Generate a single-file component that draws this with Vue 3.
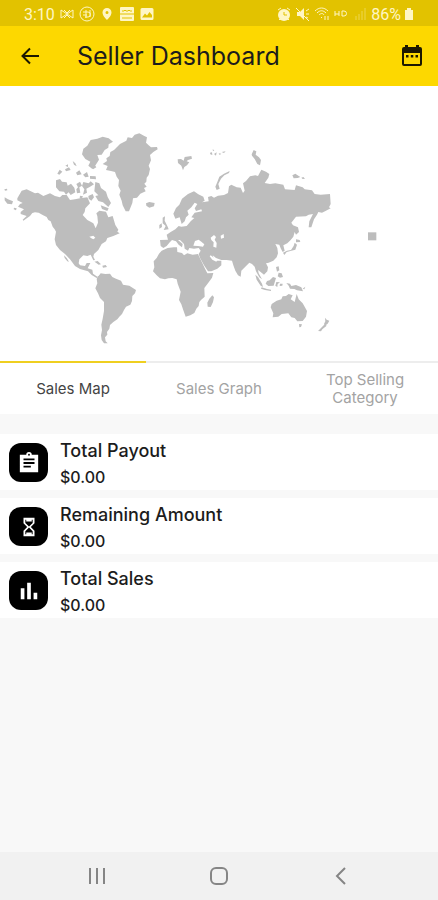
<template>
  <div class="screen">
    <div class="status-bar">
      <div class="status-group">
        <span class="clock">3:10</span>
        <svg class="status-icon" viewBox="0 0 16 16">
          <path d="M2 12V4l12 8V4L2 12M5 4l3 3 3-3M5 12l3-3 3 3" />
        </svg>
        <svg class="status-icon" viewBox="0 0 16 16">
          <circle cx="8" cy="8" r="7" />
          <path d="M4 6h5a2 2 0 0 1 0 5H6M7 4v8M11 4v7M4 9h4" />
        </svg>
        <svg class="status-icon" viewBox="0 0 16 16">
          <path
            class="solid"
            d="M8 2a4.500 4.500 0 0 0-4.500 4.500C3.500 10 8 14 8 14s4.500-4 4.500-7.500A4.500 4.500 0 0 0 8 2zm0 3a1.500 1.500 0 1 1 0 3 1.500 1.500 0 0 1 0-3z"
          />
        </svg>
        <svg class="status-icon" viewBox="0 0 16 16">
          <rect class="solid" x="1" y="1" width="14" height="14" rx="1" />
          <path class="cut" d="M3 5h2l1-1 1 1h2l1-1 1 1h2M1 8h14M3 12h10" />
        </svg>
        <svg class="status-icon" viewBox="0 0 16 16">
          <path
            class="solid"
            d="M3 2h10a1.500 1.500 0 0 1 1.500 1.500v9A1.500 1.500 0 0 1 13 14H3a1.500 1.500 0 0 1-1.500-1.500v-9A1.500 1.500 0 0 1 3 2zm0 9.500h10V9l-2.500-3L8 9.500 6 7.500z"
          />
        </svg>
      </div>
      <div class="status-group right">
        <svg class="status-icon" viewBox="0 0 16 16">
          <circle class="solid" cx="8" cy="9" r="6" />
          <path d="M2 4l3-2M14 4l-3-2M4 13l-1 1M12 13l1 1" />
          <path class="cut" d="M8 6v3h3" />
        </svg>
        <svg class="status-icon" viewBox="0 0 16 16">
          <path class="solid" d="M2 6h3l4-4v12l-4-4H2z" />
          <path d="M1 2l13 13M11 5l3-2M11 8h3M11 11l2 1" />
        </svg>
        <svg class="status-icon" viewBox="0 0 16 16">
          <path d="M1 5c4-4 9-4 13 0M3 7c3-3 6-3 9 0M5 9c2-2 4-2 5 0M7 11l1 1M11 14v-4M14 10v4" />
        </svg>
        <svg class="status-icon" viewBox="0 0 16 16">
          <path d="M2 5v5M2 8h4M6 5v5M9 5v5h2a2.500 2.500 0 0 0 0-5H9" />
        </svg>
        <svg class="status-icon faint" viewBox="0 0 16 16">
          <path d="M4 14v-4M7 14V8M10 14V5M13 14V2" />
        </svg>
        <span class="battery-text">86%</span>
        <svg class="battery-icon" viewBox="0 0 10 14">
          <path class="solid" d="M3 1h4v2h2v10H1V3h2z" />
        </svg>
      </div>
    </div>

    <header class="app-bar">
      <button class="icon-btn" aria-label="Back">
        <svg viewBox="0 0 24 24" class="bar-icon">
          <path d="M21 12H4.500M12 4.500L4.500 12l7.500 7.500" class="back-line" />
        </svg>
      </button>
      <h1>Seller Dashboard</h1>
      <button class="icon-btn" aria-label="Pick dates">
        <svg viewBox="0 0 24 24" class="bar-icon">
          <path
            fill-rule="evenodd"
            d="M5 1h3v2h8V1h3v2h1a2 2 0 0 1 2 2v15a2 2 0 0 1-2 2H4a2 2 0 0 1-2-2V5a2 2 0 0 1 2-2h1zM4 9v11h16V9zM6 11h2.500v2.500H6zm4.800 0h2.500v2.500h-2.500zm4.700 0H18v2.500h-2.500z"
          />
        </svg>
      </button>
    </header>

    <main>
      <svg class="world-map" viewBox="0 0 1314 825" role="img" aria-label="World sales map">
        <path v-for="(d, i) in land" :key="i" :d="d" />
        <path v-for="(d, i) in water" :key="'w' + i" class="water" :d="d" />
        <rect x="1104" y="439" width="25" height="24" />
      </svg>

      <div class="tabs" role="tablist">
        <button
          v-for="tab in tabs"
          :key="tab"
          class="tab"
          :class="{ active: activeTab === tab }"
          role="tab"
          :aria-selected="activeTab === tab"
          @click="activeTab = tab"
        >
          {{ tab }}
        </button>
      </div>

      <section class="totals">
        <div v-for="item in totals" :key="item.label" class="total-row">
          <span class="total-icon">
            <svg viewBox="0 0 24 24">
              <path fill-rule="evenodd" :d="item.icon" />
            </svg>
          </span>
          <div class="total-text">
            <div class="total-label">{{ item.label }}</div>
            <div>{{ item.value }}</div>
          </div>
        </div>
      </section>
    </main>

    <nav class="nav-bar">
      <button aria-label="Recent apps">
        <svg viewBox="0 0 20 20"><path d="M3 2v16M10 2v16M17 2v16" /></svg>
      </button>
      <button aria-label="Home">
        <svg viewBox="0 0 20 20"><rect x="2" y="2" width="16" height="16" rx="5" /></svg>
      </button>
      <button aria-label="Back">
        <svg viewBox="0 0 20 20"><path d="M14 2l-8 8 8 8" /></svg>
      </button>
    </nav>
  </div>
</template>

<script setup>
import { ref } from 'vue'

const tabs = ['Sales Map', 'Sales Graph', 'Top Selling Category']
const activeTab = ref('Sales Map')

const totals = [
  {
    label: 'Total Payout',
    value: '$0.00',
    icon: 'M2 3h7a3 3 0 0 1 6 0h7v19H2zM12 2a1 1 0 1 0 0 2 1 1 0 0 0 0-2zM6 7v2h12V7zm0 4v2h12v-2zm0 4v2h8v-2z'
  },
  {
    label: 'Remaining Amount',
    value: '$0.00',
    icon: 'M6 2h12v6l-4 4 4 4v6H6v-6l4-4-4-4zm2 2v3.500l4 4 4-4V4zm4 8.500l-4 4V20h8v-3.500zM9 4h6v2H9zm0 14h6v2H9z'
  },
  {
    label: 'Total Sales',
    value: '$0.00',
    icon: 'M3 9h4v12H3zM10 3h4v18h-4zM17 14h4v7h-4z'
  }
]

const land = [
  // north and central america
  'M52 337L65 314 80 310 105 322 114 320 130 330 150 322 165 330 180 334 187 327 200 327 210 342 225 340 240 337 262 334 270 352 256 367 254 378 248 387 262 402 280 412 287 427 294 410 292 390 289 382 298 374 318 377 325 394 338 390 346 417 355 431 352 437 359 442 340 450 322 456 318 466 305 474 295 492 282 504 280 512 285 522 280 523 272 506 262 510 250 508 238 520 236 532 240 538 255 540 260 531 271 531 263 547 277 551 279 563 292 572 302 566 302 571 290 576 275 567 264 556 240 549 225 540 210 520 195 504 180 492 168 477 164 460 168 437 164 430 158 422 152 406 145 402 140 393 128 387 116 380 105 379 97 381 90 390 70 404 68 401 80 390 62 384 62 378 72 370 54 362 60 354 68 351 52 343z',
  // greenland
  'M360 174L379 164 383 154 396 156 404 146 418 142 433 150 441 154 438 170 446 178 453 184 471 183 473 190 460 198 450 207 453 223 446 239 450 249 446 267 440 275 439 287 433 293 440 302 432 306 437 316 421 323 411 335 399 337 397 351 387 376 377 376 368 358 365 344 358 326 362 314 355 300 357 282 350 272 345 258 333 255 318 252 323 240 308 234 321 225 319 217 329 210 331 198 342 192z',
  // canadian arctic
  'M250 188l12-9 10-17 20-4 16-6 18 5 13 10-13 8-1 10-11 7-9 14-13 1 5 14-10 16-10 12-12-10 6-12-15-8-10-14 3-12z',
  'M168 283l12-4 6 8 14 2 3 10 10-6 10 12 3 14-14 8-6-8-8 7-6-9-14-1-10-12z',
  'M172 263l7-12 8 6-9 9zM195 250l12-6 5 8-14 4zM218 225l8 7 4 9-8-5zM196 239l8-4v8zM228 260l10-7 7 12-13 3zM249 266l12-8 5 14-10 2zM270 270l17 1 1 9-18-2z',
  'M229 294l11-7 6 12-8 5 3 16-10 2-2-12 5-6zM250 288l16 4 6-6 10 9-13 8-10 5 2 12-12 6 4-16-7-10zM286 288l12 4 5 14 15 11 5 16 10 18-8 12-16-14-14-4-9-15 9-2-12-12zM265 330l13-6 4 10-8 10-8-6zM302 358l8 3 16 6-4 8-16-6zM240 329l9 2-4 8-6-3zM273 240l8-8 8 12-10 6z',
  // aleutians and iceland
  'M13 310l8-2 1 5-7 1zM14 334l10 6 15 6-3 9-14-2-8-10zM42 365l8 2-2 6-7-3z',
  'M438 352l10-4 16 3-2 10-14 4-9-6z',
  // caribbean
  'M283 527l10-2 10 10-7 1-8-6zM307 539l10-2 4 6-12 2zM192 508l8 8 7 11-5-1-8-10z',
  // south america
  'M302 562L316 564 330 563 337 573 348 578 363 584 369 596 388 599 408 612 405 622 397 630 396 645 391 656 378 662 372 672 366 684 358 692 352 700 340 708 330 717 328 728 321 738 322 746 315 754 317 766 323 772 312 772 305 762 303 748 306 732 304 716 308 698 312 675 312 648 300 636 294 622 286 607 292 592 290 578z',
  // africa
  'M485 494L503 486 521 484 531 484 532 498 546 501 552 508 562 502 578 506 594 504 601 519 607 531 614 546 622 562 640 561 636 575 625 590 613 606 614 632 603 642 598 648 596 660 589 668 583 681 571 688 557 692 550 673 544 655 537 642 542 617 533 593 530 580 517 576 505 577 495 580 480 577 470 568 459 556 463 544 461 526 470 516 477 503z',
  'M637 628l5 6-3 14-7 15-9-1-1-12 6-12z',
  // europe and asia
  'M482 480L480 462 504 461 500 446 512 438 526 430 536 420 544 422 560 420 572 406 583 396 574 394 584 380 606 376 604 370 588 375 584 367 592 354 584 350 574 364 562 374 566 386 558 394 554 406 545 414 539 394 526 398 520 383 528 366 538 356 546 338 564 324 582 316 595 325 610 332 614 344 606 349 626 346 624 333 634 330 642 335 654 329 672 327 684 321 687 301 694 296 710 304 722 305 729 321 734 314 729 292 738 285 750 271 766 268 774 270 784 251 798 257 808 264 805 275 794 291 810 294 826 292 850 296 855 310 884 312 888 298 908 304 914 310 936 313 944 324 962 326 990 324 992 354 987 364 992 367 978 374 966 380 955 378 951 386 942 400 934 424 926 424 928 406 939 384 926 386 918 391 888 392 874 410 879 418 894 424 897 438 888 446 884 438 880 452 872 462 862 472 850 478 854 494 848 498 842 487 838 476 826 474 832 486 834 502 830 514 820 524 806 530 798 532 804 544 802 556 792 566 782 558 774 552 776 562 786 580 778 574 768 556 764 542 756 534 748 530 736 542 724 554 722 572 714 568 706 554 700 538 696 524 680 522 664 522 648 516 638 508 642 518 652 524 664 524 664 538 652 548 634 556 624 556 612 538 600 516 596 504 602 494 596 486 582 488 568 486 564 494 554 488 552 474 540 462 534 462 548 474 546 484 536 476 528 466 516 462 508 470 500 480 490 486z',
  // british isles
  'M488 395l7-4-1 13 9 18 3 8-15 2 6-12-9-8zM478 417l7-5 1 11-8 5z',
  // svalbard, franz josef and novaya zemlya
  'M533 220l10-1 8 5 3-11 20-3 2 8-12 4-4 4 8 3-7 9-8 5-4 10-5-14-10-8z',
  'M630 200l6-1 1 8-6-2zM642 204l8-5-2 10zM656 202l8 1-5 4zM665 198l12-2-5 5zM638 190l5 3-4 3z',
  'M650 312l-4-10 6-14 6-16 14-9 17-8-2 6-14 7-10 10-8 16 4 14z',
  // siberian islands
  'M755 205l6-13 8 4-2 10 10 8 6 8-3 16-8-4-8-15-8-10zM877 268l9-5 9 6 6 4-8 3-12 1zM904 275l6-2 5 5-7 1z',
  // sakhalin and japan
  'M888 460l11 2 2 6-13 1zM884 470l7 6-5 15-12 3-14 4-7 9-4-7 12-6 12-2 8-12z',
  // south east asia
  'M766 566l8 7 12 20 3 10-7-4-12-18zM785 604l16 5 12 2v4l-18-3-12-4zM801 585l8-2 10-10 9 3-3 10-4 13-16 1-8-7zM828 543l8-2 2 12-7 4zM836 560l9 2 4 11-9 2-7-4zM829 588l11 1-7 5-1 9-6-4zM840 593h8l-1 6-8 1z',
  'M859 591l11 2 4 7 14-3 16 7 5 12-18-3-8-4-13-1-4-9zM908 608l8-6-3 8z',
  // australia, tasmania and new zealand
  'M815 654L830 644 844 640 848 631 858 630 866 624 878 628 872 640 884 648 890 624 896 640 908 652 914 662 921 675 918 692 908 705 892 706 884 696 874 694 865 682 845 684 835 692 818 694 820 682 812 664z',
  'M897 714l9 1-3 8-5 1zM975 695l5 6 8 3-5 9-8 6-3-5 4-8zM974 715l6 4-13 11-4 6-9-1 9-9z'
]

const water = [
  // great lakes
  'M268 452l12-3 6 6-6 5-6-3z',
  // black, caspian and aral seas
  'M580 479l5-14 11-4 8 6 9 8-4 7-15-2z',
  'M632 455l10-8 6 6-4 8 6 10-1 14-9-3 1-13-7-7zM662 449l9-5 1 11-9 3z',
  // persian gulf
  'M632 508l7 5 13 9-3 5-12-6-8-10z'
]
</script>

<style>
body {
  background: #f8f8f8;
}
</style>

<style scoped>
.screen {
  display: flex;
  flex-direction: column;
  min-height: 100vh;
  background: #f8f8f8;
  color: #1c1c1c;
  font-family: Inter, sans-serif;
}
button {
  padding: 0;
  border: none;
  background: none;
  color: inherit;
  font: inherit;
  cursor: pointer;
}
.status-bar {
  display: flex;
  justify-content: space-between;
  align-items: center;
  height: 26px;
  padding: 2px 24px 0;
  box-sizing: border-box;
  background: #e2c200;
  color: #fff6c4;
  font-family: Roboto, sans-serif;
  font-size: 16px;
}
.status-group {
  display: flex;
  align-items: center;
  gap: 4px;
}
.status-group.right {
  gap: 3px;
}
.status-icon {
  width: 16px;
  height: 16px;
  fill: none;
  stroke: #fff6c4;
  stroke-width: 1;
}
.status-icon .solid,
.battery-icon .solid {
  fill: #fff6c4;
  fill-rule: evenodd;
  stroke: none;
}
.status-icon .cut {
  stroke: #e2c200;
}
.faint {
  opacity: 0.4;
}
.battery-icon {
  width: 10px;
  height: 14px;
}
.app-bar {
  display: flex;
  align-items: center;
  height: 60px;
  padding: 0 14px 0 18px;
  background: #fdd800;
}
.app-bar h1 {
  flex: 1;
  margin: 0 0 0 35px;
  font-size: 25px;
  font-weight: 400;
}
.icon-btn {
  display: flex;
}
.bar-icon {
  width: 24px;
  height: 24px;
  fill: #1c1800;
}
.back-line {
  fill: none;
  stroke: #1c1800;
  stroke-width: 2;
}
.world-map {
  display: block;
  width: 100%;
  background: #fff;
  fill: #bdbdbd;
}
.world-map .water {
  fill: #fff;
}
.tabs {
  display: grid;
  grid-template-columns: repeat(3, 1fr);
  min-height: 53px;
  background: #fff;
}
.tab {
  padding: 0 24px;
  border-top: 2px solid #ededed;
  color: #a3a3a3;
  font-size: 15px;
  line-height: 18px;
}
.tab.active {
  border-top-color: #efcf20;
  color: #444;
}
.totals {
  display: flex;
  flex-direction: column;
  gap: 8px;
  margin-top: 20px;
}
.total-row {
  display: flex;
  align-items: flex-start;
  gap: 12px;
  padding: 4px 9px 0;
  background: #fff;
}
.total-icon {
  display: flex;
  align-items: center;
  justify-content: center;
  width: 39px;
  height: 39px;
  margin-top: 5px;
  border-radius: 12px;
  background: #000;
}
.total-icon svg {
  width: 22px;
  height: 22px;
  fill: #fff;
}
.total-text {
  font-size: 16px;
  font-weight: 500;
  line-height: 26px;
}
.total-label {
  font-size: 18px;
}
.nav-bar {
  display: flex;
  justify-content: space-around;
  align-items: center;
  height: 48px;
  margin-top: auto;
  padding: 0 36px;
  background: #f1f1f1;
}
.nav-bar button {
  display: flex;
}
.nav-bar svg {
  width: 20px;
  height: 20px;
  fill: none;
  stroke: #858585;
  stroke-width: 2;
}
</style>
